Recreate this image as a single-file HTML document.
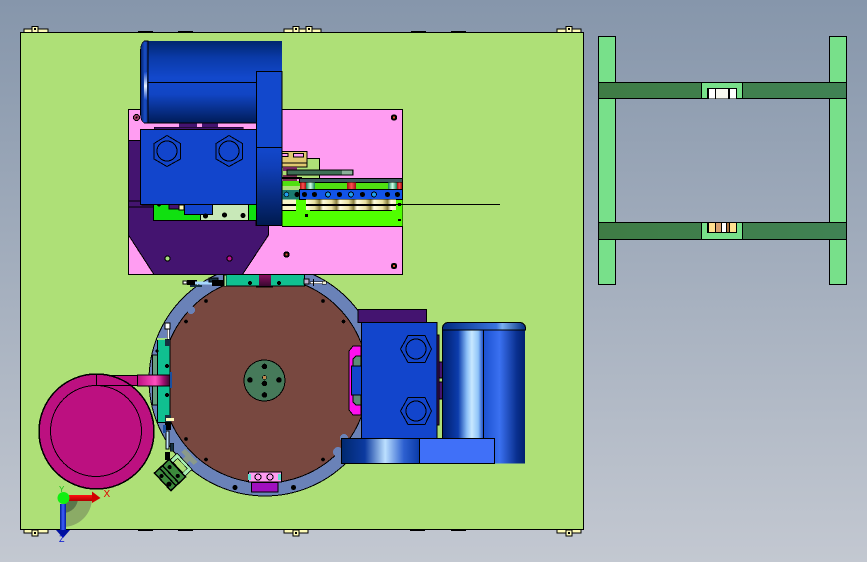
<!DOCTYPE html>
<html>
<head>
<meta charset="utf-8">
<style>
html,body{margin:0;padding:0;width:867px;height:562px;overflow:hidden;background:#a0a9b8}
svg{display:block}
</style>
</head>
<body>
<svg width="867" height="562" viewBox="0 0 867 562" xmlns="http://www.w3.org/2000/svg" shape-rendering="crispEdges" stroke-linejoin="miter">
<defs>
<linearGradient id="bg" x1="0" y1="0" x2="0" y2="1"><stop offset="0" stop-color="#8696ab"/><stop offset="1" stop-color="#c3c8d1"/></linearGradient>
<linearGradient id="mot" x1="0" y1="0" x2="0" y2="1"><stop offset="0" stop-color="#00266e"/><stop offset=".2" stop-color="#0a3aa8"/><stop offset=".45" stop-color="#1248cc"/><stop offset=".65" stop-color="#1145c4"/><stop offset="1" stop-color="#001c58"/></linearGradient>
<linearGradient id="cap" x1="0" y1="0" x2="1" y2="0"><stop offset="0" stop-color="#001f66"/><stop offset=".6" stop-color="#1a4fc8"/><stop offset="1" stop-color="#0a3090"/></linearGradient>
<linearGradient id="capw" x1="0" y1="0" x2="0" y2="1"><stop offset="0" stop-color="#1248cc"/><stop offset=".5" stop-color="#e8f2ff"/><stop offset="1" stop-color="#1248cc"/></linearGradient>
<linearGradient id="tall" x1="0" y1="0" x2="0" y2="1"><stop offset="0" stop-color="#1248cc"/><stop offset=".25" stop-color="#103fb8"/><stop offset="1" stop-color="#001a4e"/></linearGradient>
<linearGradient id="cyl1" x1="0" y1="0" x2="1" y2="0"><stop offset="0" stop-color="#001f6e"/><stop offset=".38" stop-color="#0c3cac"/><stop offset=".6" stop-color="#8cc0f8"/><stop offset=".72" stop-color="#c8e8ff"/><stop offset=".88" stop-color="#90c4f8"/><stop offset="1" stop-color="#2050c8"/></linearGradient>
<linearGradient id="cyl2" x1="0" y1="0" x2="1" y2="0"><stop offset="0" stop-color="#1a50d0"/><stop offset=".4" stop-color="#3a70f0"/><stop offset=".8" stop-color="#0a3090"/><stop offset="1" stop-color="#00206e"/></linearGradient>
<linearGradient id="cylcap" x1="0" y1="0" x2="1" y2="0"><stop offset="0" stop-color="#002a80"/><stop offset=".65" stop-color="#3a74e0"/><stop offset=".72" stop-color="#7ab0f0"/><stop offset="1" stop-color="#002a80"/></linearGradient>
<linearGradient id="base" x1="0" y1="0" x2="1" y2="0"><stop offset="0" stop-color="#00286e"/><stop offset=".3" stop-color="#0c3aa0"/><stop offset=".56" stop-color="#bce0ff"/><stop offset=".8" stop-color="#2d60d0"/><stop offset="1" stop-color="#0a3aa8"/></linearGradient>
<linearGradient id="chute" x1="0" y1="0" x2="1" y2="0"><stop offset="0" stop-color="#bc1080"/><stop offset=".55" stop-color="#ff50c0"/><stop offset=".8" stop-color="#a01070"/><stop offset="1" stop-color="#380a30"/></linearGradient>
<linearGradient id="darkm" x1="0" y1="0" x2="0" y2="1"><stop offset="0" stop-color="#8a1060"/><stop offset="1" stop-color="#380830"/></linearGradient>
<linearGradient id="red" x1="0" y1="0" x2="1" y2="0"><stop offset="0" stop-color="#a01010"/><stop offset=".5" stop-color="#ff5050"/><stop offset="1" stop-color="#a01010"/></linearGradient>
<linearGradient id="teal" x1="0" y1="0" x2="1" y2="0"><stop offset="0" stop-color="#108050"/><stop offset=".5" stop-color="#d0ffe8"/><stop offset="1" stop-color="#108050"/></linearGradient>
<linearGradient id="roll" x1="0" y1="0" x2="17" y2="0" gradientUnits="userSpaceOnUse" spreadMethod="repeat"><stop offset="0" stop-color="#fffde0"/><stop offset=".5" stop-color="#e8e0a0"/><stop offset=".8" stop-color="#8a8040"/><stop offset="1" stop-color="#fffde0"/></linearGradient>
<linearGradient id="arrR" x1="0" y1="0" x2="0" y2="1"><stop offset="0" stop-color="#ff1010"/><stop offset="1" stop-color="#b00000"/></linearGradient>
<linearGradient id="arrB" x1="0" y1="0" x2="1" y2="0"><stop offset="0" stop-color="#001a90"/><stop offset=".5" stop-color="#4060ff"/><stop offset="1" stop-color="#0018a0"/></linearGradient>
<linearGradient id="dg" x1="0" y1="0" x2="1" y2="0"><stop offset="0" stop-color="#3f7c45"/><stop offset="1" stop-color="#408254"/></linearGradient>
</defs>
<rect width="867" height="562" fill="url(#bg)"/>

<!-- plate tabs -->
<g fill="#fdfbb8" stroke="#000" stroke-width="1">
<rect x="24" y="29" width="24" height="4"/><rect x="32" y="26.500" width="6" height="6"/>
<rect x="284" y="29" width="37" height="4"/><rect x="293" y="26.500" width="6" height="6"/><rect x="306" y="26.500" width="6" height="6"/>
<rect x="557" y="29" width="24" height="4"/><rect x="566" y="26.500" width="6" height="6"/>
<rect x="24" y="529" width="24" height="4"/><rect x="32" y="530" width="6" height="6"/>
<rect x="284" y="529" width="24" height="4"/><rect x="293" y="530" width="6" height="6"/>
<rect x="557" y="529" width="24" height="4"/><rect x="566" y="530" width="6" height="6"/>
</g>
<g fill="#000"><rect x="34" y="28" width="2" height="2"/><rect x="295" y="28" width="2" height="2"/><rect x="308" y="28" width="2" height="2"/><rect x="568" y="28" width="2" height="2"/><rect x="34" y="532" width="2" height="2"/><rect x="295" y="532" width="2" height="2"/><rect x="568" y="532" width="2" height="2"/>
<rect x="138" y="31" width="15" height="2"/><rect x="178" y="31" width="15" height="2"/><rect x="411" y="31" width="15" height="2"/><rect x="451" y="31" width="15" height="2"/>
<rect x="138" y="530" width="15" height="1"/><rect x="178" y="530" width="15" height="1"/><rect x="410" y="530" width="15" height="1"/><rect x="451" y="530" width="15" height="1"/></g>

<!-- green plate -->
<rect x="20.500" y="32.500" width="563" height="497" fill="#aee077" stroke="#000"/>

<!-- ring + disc (behind plates) -->
<circle cx="265" cy="380" r="116" fill="#6a82b8" stroke="#000"/>
<circle cx="265" cy="380" r="103" fill="#784840" stroke="#000"/>
<circle cx="191" cy="310" r="4" fill="#6a82b8"/>
<circle cx="338" cy="452" r="5" fill="#6a82b8"/>
<circle cx="344" cy="438" r="4" fill="#6a82b8"/>

<!-- pink plate -->
<rect x="128.500" y="109.500" width="274" height="165" fill="#ff9df2" stroke="#000"/>

<!-- purple body -->
<path d="M128.500 140.500H142V205H256V225.500H268.500V235L242.500 274.500H154L128.500 235Z" fill="#441470" stroke="#000"/>
<path d="M128.500 201H153M128.500 207H153" stroke="#000" fill="none"/>
<rect x="154" y="127" width="89" height="2.500" fill="#441470" stroke="#000" stroke-width=".5"/>
<rect x="179" y="123" width="39" height="4" fill="#441470"/>
<rect x="197" y="123" width="5" height="4" fill="#ff9df2"/>

<!-- green under block -->
<rect x="153.500" y="204" width="103" height="16.500" fill="#10e010" stroke="#000"/>
<rect x="200.500" y="204" width="48" height="16.500" fill="#c8e8b8" stroke="#000"/>
<rect x="169" y="204" width="10" height="5" fill="#441470" stroke="#000" stroke-width=".8"/>
<rect x="179" y="205" width="5" height="5" fill="#fdfbb8" stroke="#000" stroke-width=".6"/>
<rect x="184.500" y="204" width="28" height="10.500" fill="#1245cc" stroke="#000"/>
<g fill="#000"><circle cx="205.500" cy="216" r="2.500"/><circle cx="224.500" cy="215" r="2.500"/><circle cx="243" cy="215.500" r="2.500"/><circle cx="159" cy="204.500" r="2"/></g>

<!-- right details: light green, tan -->
<rect x="282" y="158.500" width="37.500" height="20" fill="#aee077" stroke="#000" stroke-width=".8"/>
<rect x="282" y="151.500" width="25" height="11.500" fill="#e0c870" stroke="#000"/>
<rect x="282" y="163" width="25" height="4" fill="#e0c870" stroke="#000"/>
<rect x="282" y="153.500" width="6" height="3" fill="#ff9df2" stroke="#000" stroke-width=".8"/><rect x="293.500" y="153.500" width="10" height="3.500" fill="#ff9df2" stroke="#000" stroke-width=".8"/>
<rect x="283" y="167" width="14" height="4" fill="#782860"/>
<rect x="283" y="175" width="14" height="9" fill="#783050"/>
<rect x="287" y="170" width="66" height="5" fill="#3f6f55" stroke="#000"/>
<rect x="342" y="170.500" width="10" height="4" fill="#8ab098"/>
<rect x="282" y="177" width="20" height="2" fill="#000"/>

<!-- bright green strip -->
<rect x="282" y="199" width="120.500" height="27" fill="#50ff00"/>
<path d="M282 226.500H402.500" stroke="#000"/>
<rect x="300" y="182" width="102" height="8" fill="#50e010"/>
<rect x="282" y="181" width="18" height="10" fill="#50e010"/>
<rect x="282" y="186" width="18" height="4" fill="#aee077"/>
<rect x="299.500" y="178.500" width="103" height="4" fill="#3d5a60" stroke="#000"/>
<rect x="300" y="182.500" width="6" height="7" fill="url(#red)"/>
<rect x="306" y="182.500" width="9" height="7" fill="url(#teal)"/>
<rect x="347" y="182.500" width="9" height="7" fill="url(#red)"/>
<rect x="388" y="182.500" width="9" height="7" fill="url(#teal)"/>
<rect x="397" y="182.500" width="5" height="7" fill="url(#red)"/>
<rect x="282" y="190" width="18" height="9.500" fill="#1a7a70"/>
<rect x="299.500" y="189.500" width="103" height="10" fill="#1254e8" stroke="#000" stroke-width=".8"/>
<g fill="#000"><circle cx="304.500" cy="194.500" r="2.600"/><circle cx="314.500" cy="194.500" r="2.600"/><circle cx="339.500" cy="194.500" r="2.600"/><circle cx="362.500" cy="194.500" r="2.600"/><circle cx="387.500" cy="194.500" r="2.600"/><circle cx="397.500" cy="194.500" r="2.600"/><circle cx="297" cy="194.500" r="2.500"/></g>
<g fill="#20a0f0" stroke="#000" stroke-width=".8"><circle cx="286.500" cy="194.500" r="2.400"/><circle cx="328" cy="194.500" r="2.500"/><circle cx="351" cy="194.500" r="2.500"/><circle cx="374" cy="194.500" r="2.500"/></g>
<!-- rollers -->
<rect x="282" y="199.500" width="14" height="4.500" fill="#f8f5c8"/>
<rect x="282" y="206" width="14" height="4" fill="#f8f5c8"/>
<rect x="306" y="199.500" width="90" height="4.500" fill="url(#roll)"/>
<rect x="306" y="206" width="90" height="4" fill="url(#roll)"/>
<g fill="#000"><rect x="282" y="204" width="14" height="2"/><rect x="306" y="204" width="90" height="2"/><rect x="396" y="204" width="104" height="1"/><rect x="282" y="210" width="14" height="1"/><rect x="310" y="210" width="82" height="1"/>
<rect x="305" y="214" width="3" height="3"/><rect x="398" y="203" width="3" height="3"/><rect x="398" y="219" width="3" height="2"/></g>

<!-- top motor -->
<path d="M148 41H144Q140.500 44 140.500 50V115Q140.500 120 144 123H148Z" fill="url(#cap)"/>
<rect x="144" y="72" width="3" height="28" fill="url(#capw)"/>
<rect x="148" y="41" width="134" height="82" fill="url(#mot)"/>
<path d="M148 40.500V123M148 123H282M148 82.500H256" stroke="#000" fill="none"/>
<path d="M148 41H144Q140.500 44 140.500 50V115Q140.500 120 144 123H148" stroke="#000" stroke-width=".6" fill="none"/>
<rect x="140.500" y="129.500" width="116" height="75" fill="#1245cc" stroke="#000"/>
<g fill="none" stroke="#000">
<path d="M167 135.500L180.500 143.500V159L167 166.500L154 159V143.500Z"/><circle cx="167" cy="151" r="10"/>
<path d="M229 135.500L242.500 143.500V159L229 166.500L216 159V143.500Z"/><circle cx="229" cy="151" r="10"/>
</g>
<rect x="256.500" y="71.500" width="25.500" height="76" fill="#1248cc" stroke="#000"/>
<rect x="256.500" y="147.500" width="25.500" height="78" fill="url(#tall)" stroke="#000"/>

<!-- plate holes -->
<g>
<circle cx="136.500" cy="117.500" r="3" fill="#b04070" stroke="#000"/><circle cx="136.500" cy="117.500" r="1" fill="#000"/>
<circle cx="394" cy="117.500" r="3.200" fill="#000"/><circle cx="394" cy="117.500" r="1.100" fill="#e05030"/>
<circle cx="394" cy="266" r="3.200" fill="#000"/><circle cx="394" cy="266" r="1.100" fill="#e05030"/>
<circle cx="286.500" cy="254.500" r="3.200" fill="#000"/><circle cx="286.500" cy="254.500" r="1.100" fill="#e05030"/>
<circle cx="167.500" cy="258.500" r="2.600" fill="#a8e080" stroke="#000"/>
<circle cx="229.500" cy="258.500" r="2.600" fill="#c01090" stroke="#000"/>
</g>

<!-- disc holes -->
<g fill="#000"><circle cx="206" cy="301" r="1.800"/><circle cx="186" cy="321.500" r="1.800"/><circle cx="323" cy="301" r="1.800"/><circle cx="343.500" cy="321.500" r="1.800"/><circle cx="186" cy="439" r="1.800"/><circle cx="206" cy="459.500" r="1.800"/><circle cx="323" cy="459.500" r="1.800"/><circle cx="235" cy="487.500" r="2.500"/><circle cx="293.500" cy="487.500" r="2.500"/></g>

<!-- centre hub -->
<circle cx="264.500" cy="380.500" r="20.500" fill="#467a5a" stroke="#000"/>
<g fill="#000"><circle cx="264.500" cy="366.500" r="2.800"/><circle cx="250" cy="380" r="2.800"/><circle cx="279" cy="380" r="2.800"/><circle cx="264.500" cy="383.500" r="2.800"/><circle cx="264.500" cy="395" r="2.800"/></g>
<circle cx="264.500" cy="377.500" r="2" fill="#c08a50" stroke="#000" stroke-width=".6"/>

<!-- top teal piece -->
<rect x="223.500" y="274.500" width="81" height="11.500" fill="#10c090" stroke="#000"/>
<rect x="259" y="275" width="12" height="11" fill="url(#darkm)"/>
<path d="M256 286.500H273" stroke="#000" stroke-width="1.500"/>
<circle cx="250" cy="283" r="2" fill="#000"/><circle cx="279" cy="283" r="2" fill="#000"/>
<g>
<rect x="183" y="281" width="4" height="3" fill="#fff" stroke="#000" stroke-width=".7"/>
<rect x="187" y="280" width="10" height="5" fill="#000"/>
<rect x="195" y="281.500" width="17" height="3" fill="#a8d8ff"/>
<rect x="209" y="278" width="9" height="4" fill="#163040" stroke="#000" stroke-width=".6"/>
<rect x="190" y="285" width="12" height="2" fill="#163040"/>
<rect x="212" y="280" width="11" height="6" fill="#000"/>
<rect x="224" y="275" width="2" height="11" fill="#a0e090" stroke="#000" stroke-width=".5"/>
<rect x="304" y="279" width="5" height="5" fill="#c0b0d0" stroke="#000" stroke-width=".7"/>
<rect x="310" y="281.500" width="12" height="2" fill="#fff" stroke="#000" stroke-width=".5"/>
<rect x="313" y="279" width="1" height="7" fill="#000"/>
<rect x="322" y="281" width="4" height="3" fill="#f0f0d0" stroke="#000" stroke-width=".5"/>
</g>

<!-- left teal clamp -->
<rect x="152.500" y="355" width="6" height="50" fill="#68a080" stroke="#000"/>
<rect x="157.500" y="338.500" width="12.500" height="84" fill="#10c090" stroke="#000"/>
<rect x="157" y="338" width="13" height="2" fill="#a0e080"/>
<g fill="#000"><circle cx="167" cy="366" r="2"/><circle cx="167" cy="395" r="2"/><circle cx="157" cy="351" r="1.500"/></g>
<rect x="165" y="339" width="5" height="7" fill="#163040"/><rect x="165" y="415" width="6" height="7" fill="#163040"/>
<rect x="165" y="323" width="5" height="6" fill="#fff" stroke="#000" stroke-width=".7"/>
<rect x="167" y="329" width="2" height="10" fill="#fff" stroke="#000" stroke-width=".5"/>
<rect x="166" y="418" width="8" height="3" fill="#fdfbb8"/>
<rect x="165" y="423" width="6" height="7" fill="#000"/>
<rect x="166" y="431" width="3" height="18" fill="#bfe4ff" stroke="#000" stroke-width=".6"/>
<rect x="170" y="443" width="3.500" height="8" fill="#163040" stroke="#000" stroke-width=".5"/>
<rect x="165" y="452" width="5" height="8" fill="#000"/>
<rect x="163" y="425" width="3" height="8" fill="#1a50a0"/>

<!-- bowl + chute -->
<path d="M96.500 375.500H170V385.500H132Q118 378 96.500 375.500Z" fill="#bc1080" stroke="#000"/>
<rect x="137.500" y="375" width="32.500" height="11" fill="url(#chute)" stroke="#000" stroke-width=".8"/>
<rect x="170" y="372" width="2" height="16" fill="#1a50a0"/>
<circle cx="96.500" cy="431.500" r="57.500" fill="#bc1080" stroke="#000" stroke-width="1.500"/>
<circle cx="96" cy="431" r="45.500" fill="#bc1080" stroke="#000"/>
<path d="M96.500 374.500V385.500H132" stroke="#000" fill="none"/>

<!-- clamp bottom-left -->
<g transform="translate(170 475) rotate(47)">
<rect x="-9" y="-29" width="18" height="5" fill="#8a9a8a"/>
<rect x="-3" y="-26" width="6" height="8" fill="#8a9a8a"/>
<rect x="-11" y="-20" width="22" height="10" fill="#a8f0b0" stroke="#000" stroke-width=".8"/>
<rect x="-7" y="-17" width="14" height="6" fill="#aee077" stroke="#000" stroke-width=".5"/>
<rect x="-12" y="-10" width="24" height="20" fill="#3c8a3c" stroke="#000" stroke-width="1.500"/>
<path d="M-12 -1H12M-12 3H12" stroke="#000" stroke-width="1.500"/>
<circle cx="-6" cy="-5" r="2" fill="#000"/><circle cx="6" cy="7" r="2.500" fill="#000"/><circle cx="-5" cy="7" r="2" fill="#000"/><circle cx="6" cy="-5" r="2" fill="#000"/>
</g>

<!-- bottom pink piece -->
<rect x="248.500" y="472" width="33" height="10" fill="#ff9df2" stroke="#000"/>
<rect x="248" y="474" width="3" height="6" fill="#60e0d0"/><rect x="278" y="474" width="3" height="6" fill="#60e0d0"/>
<circle cx="258" cy="477" r="3" fill="#ff9df2" stroke="#000"/><circle cx="270" cy="477" r="3" fill="#ff9df2" stroke="#000"/>
<rect x="251.500" y="482.500" width="26.500" height="9.500" fill="#a010c0" stroke="#000"/>

<!-- right bracket -->
<path d="M361 346H353L349 351V410L353 415H361Z" fill="#ff10f0" stroke="#000"/>
<path d="M361 356H356L353 359V402L356 405H361Z" fill="#5f8a78" stroke="#000"/>
<rect x="351.500" y="366" width="10" height="29" fill="#1245cc" stroke="#000"/>

<!-- right motor -->
<rect x="358" y="309.500" width="68.500" height="13" fill="#441470" stroke="#000"/>
<rect x="437" y="335" width="2" height="90" fill="#441470" stroke="#000" stroke-width=".6"/>
<rect x="439" y="362" width="4" height="16" fill="#441470" stroke="#000" stroke-width=".6"/>
<rect x="439" y="382" width="4" height="17" fill="#441470" stroke="#000" stroke-width=".6"/>
<rect x="443" y="330" width="40" height="133" fill="url(#cyl1)"/>
<rect x="483" y="330" width="42" height="133.500" fill="url(#cyl2)"/>
<path d="M483.500 330V440M442.500 330V440" stroke="#000"/>
<path d="M442.500 330V328Q443 322.500 449 322.500H519Q525 322.500 525.500 328V330Z" fill="url(#cylcap)" stroke="#000"/>
<rect x="361.500" y="322.500" width="75.500" height="116" fill="#1245cc" stroke="#000"/>
<g fill="none" stroke="#000">
<path d="M400.500 349L408 335.500H425L431.500 349L425 362.500H408Z"/><circle cx="416" cy="349" r="10"/>
<path d="M400.500 411L408 397.500H425L431.500 411L425 424.500H408Z"/><circle cx="416" cy="411" r="10"/>
</g>
<rect x="341.500" y="438.500" width="78" height="25" fill="url(#base)" stroke="#000"/>
<rect x="419.500" y="438.500" width="75" height="25" fill="#4070f8" stroke="#000"/>

<!-- right side view -->
<rect x="598.500" y="36.500" width="17" height="248" fill="#78e08a" stroke="#000"/>
<rect x="829.500" y="36.500" width="17" height="248" fill="#78e08a" stroke="#000"/>
<rect x="598.500" y="82.500" width="248" height="16" fill="url(#dg)" stroke="#000"/>
<rect x="598.500" y="222.500" width="248" height="17" fill="url(#dg)" stroke="#000"/>
<rect x="701.500" y="82.500" width="41" height="16" fill="#78e08a" stroke="#000"/>
<rect x="701.500" y="222.500" width="41" height="17" fill="#78e08a" stroke="#000"/>
<rect x="707" y="88" width="30" height="10.500" fill="#000"/>
<rect x="709" y="89" width="6" height="9.500" fill="#fff"/><rect x="716" y="89" width="12" height="9.500" fill="#f8f8f0"/><rect x="730" y="89" width="6" height="9.500" fill="#fff"/>
<rect x="707" y="222" width="30" height="11" fill="#000"/>
<rect x="709" y="223" width="6" height="9" fill="#ffe090"/><rect x="716" y="223" width="5" height="9" fill="#d8a070"/><rect x="722" y="223" width="4" height="9" fill="#fff"/><rect x="727" y="223" width="2" height="9" fill="#a87040"/><rect x="730" y="223" width="6" height="9" fill="#ffe090"/>

<!-- triad -->
<g shape-rendering="auto">
<path d="M63 498H92A29 29 0 0 1 63 527Z" fill="#7f9a60" fill-opacity=".75"/>
<path d="M63 498H78A15 15 0 0 1 63 513Z" fill="#4f6a45" fill-opacity=".8"/>
<rect x="69" y="495" width="23" height="6" fill="url(#arrR)"/>
<path d="M92 491.500L100.500 498L92 503Z" fill="#d00000"/>
<rect x="60" y="504" width="6" height="26" fill="url(#arrB)"/>
<path d="M56 530H70L63 538Z" fill="#0010a0"/>
<circle cx="63.500" cy="498" r="6" fill="#10f010"/>
<text x="103.500" y="497" font-family="Liberation Sans, sans-serif" font-size="10" fill="#e00000">X</text>
<text x="59" y="492" font-family="Liberation Sans, sans-serif" font-size="8" fill="#10c010">Y</text>
<text x="59" y="542" font-family="Liberation Sans, sans-serif" font-size="9" fill="#0010d0">Z</text>
</g>
</svg>
</body>
</html>
